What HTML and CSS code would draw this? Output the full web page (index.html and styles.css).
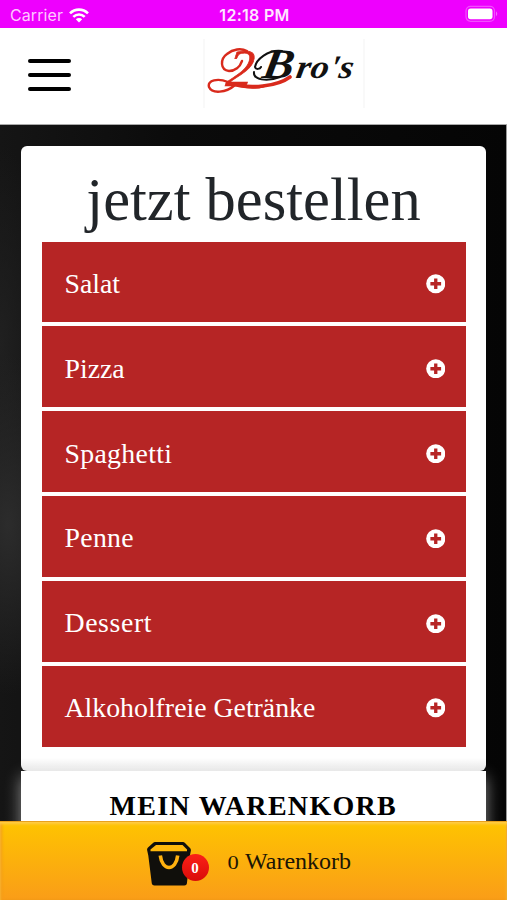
FILE: index.html
```
<!DOCTYPE html>
<html lang="de">
<head>
<meta charset="utf-8">
<meta name="viewport" content="width=device-width, initial-scale=1">
<title>2Bro's – jetzt bestellen</title>
<link rel="stylesheet" href="styles.css">
</head>
<body>
<div class="app">
  <div class="status">
    <div class="carrier"><span>Carrier</span>
      <svg class="wifi" width="20" height="15" viewBox="0 0 20 15"><g fill="none" stroke="#fff" stroke-width="2.6"><path d="M1 5.4C6 .4 14 .4 19 5.4"/><path d="M4.3 8.9c3.3-3.2 8.1-3.2 11.4 0"/></g><path fill="#fff" d="M6.8 11.2c1.8-1.7 4.6-1.7 6.4 0L10 14.5z"/></svg>
    </div>
    <span class="time">12:18 PM</span>
    <svg class="battery" width="34" height="18" viewBox="0 0 34 18"><rect x="1" y="1.3" width="28.5" height="15" rx="4.5" fill="none" stroke="#fff" stroke-opacity=".3" stroke-width="1.2"/><rect x="3" y="3.6" width="24.5" height="10.6" rx="2.6" fill="#fff"/><path d="M31 6.3q2.5 2.5 0 5z" fill="#fff" fill-opacity=".4"/></svg>
  </div>
  <header class="header">
    <button class="menu" aria-label="Menü"><i></i><i></i><i></i></button>
    <svg class="logo" width="162" height="70" viewBox="203 39 162 70">
      <path d="M204 39v69M364 39v69" stroke="#f8f8f8" stroke-width="1.5"/>
      <text class="two" transform="translate(225 85.500) skewX(-8)">2</text>
      <g class="flourish"><path stroke-width="2.4" d="M242 61C240 67 235 71 229 71C220 70 220 59 227 54C233 49 241 48 247 51"/><path stroke-width="2.4" d="M235 85C226 93 212 94 209 87C207 80 218 78 228 82C238 86 251 90 264 86"/><path stroke-width="3.6" d="M229 83C250 90 278 86 290 77"/></g>
      <path class="ink" d="M282 51C268 49 256 60 255 67C256 70 260 69 261 67M254 72C253 80 267 82 280 77"/>
      <text class="name b" transform="translate(261 78) skewX(-10)" textLength="31" lengthAdjust="spacingAndGlyphs">B</text>
      <text class="name" transform="translate(295 78) skewX(-10)" textLength="57" lengthAdjust="spacingAndGlyphs">ro's</text>
    </svg>
  </header>
  <main class="stage">
    <section class="card">
      <h1>jetzt bestellen</h1>
      <ul class="list">
        <li><span>Salat</span><svg class="plus" viewBox="0 0 20 20"><circle cx="10" cy="10" r="9.8"/><path d="M10 4.5v11M4.500 10h11"/></svg></li>
        <li><span>Pizza</span><svg class="plus" viewBox="0 0 20 20"><circle cx="10" cy="10" r="9.8"/><path d="M10 4.5v11M4.500 10h11"/></svg></li>
        <li><span class="wide">Spaghetti</span><svg class="plus" viewBox="0 0 20 20"><circle cx="10" cy="10" r="9.8"/><path d="M10 4.5v11M4.500 10h11"/></svg></li>
        <li><span class="wide">Penne</span><svg class="plus" viewBox="0 0 20 20"><circle cx="10" cy="10" r="9.8"/><path d="M10 4.5v11M4.500 10h11"/></svg></li>
        <li><span class="wider">Dessert</span><svg class="plus" viewBox="0 0 20 20"><circle cx="10" cy="10" r="9.8"/><path d="M10 4.5v11M4.500 10h11"/></svg></li>
        <li><span>Alkoholfreie Getränke</span><svg class="plus" viewBox="0 0 20 20"><circle cx="10" cy="10" r="9.8"/><path d="M10 4.5v11M4.500 10h11"/></svg></li>
      </ul>
    </section>
    <section class="cart"><h2>MEIN WARENKORB</h2></section>
  </main>
  <footer class="bar">
    <div class="basket">
      <svg width="44" height="44" viewBox="0 0 44 44"><path fill="#100f0b" d="M8 0h28q1 0 2 1l5 5q1 1 .9 2.500l-1 5-3 28q-.3 2-2.500 2h-30q-2.200 0-2.600-2L1.300 13.500.1 8q-.2-1.500.9-2.500l5-4.500q1-1 2-1z"/><path fill="#ffb80b" d="M9 3h26.500l4.500 4.500v1.800H3.500V7.500z"/><path d="M13.300 13.500C15 29.500 29 29.500 30.700 13.500" fill="none" stroke="#ffb10f" stroke-width="3.600"/></svg>
      <span class="badge">0</span>
    </div>
    <div class="total"><span class="zero">0</span><span>Warenkorb</span></div>
  </footer>
</div>
</body>
</html>
```
FILE: styles.css
```
* { box-sizing: border-box; }
body { margin: 0; font-family: "Liberation Serif", serif; }
.app {
  width: 507px; height: 900px; overflow: hidden;
  display: flex; flex-direction: column;
  background: #fff;
}
.status {
  height: 28px; flex: none; padding: 0 8px 0 10px;
  display: grid; grid-template-columns: 1fr auto 1fr; align-items: center;
  background: #ee00fe; color: #fff;
  font: 500 16px/28px Inter, sans-serif;
}
.carrier { display: flex; align-items: center; gap: 7px; color: #ffc8ff; font-weight: 400; letter-spacing: .1px; }
.carrier span { width: 52px; padding-top: 1px; }
.wifi { margin-top: 1px; }
.time { font-weight: 600; font-size: 16px; letter-spacing: .3px; padding-top: 1px; color: #ffe6ff; }
.battery { justify-self: end; margin-top: -2px; }
.header {
  height: 97px; flex: none; padding: 11px 142px 0 28px;
  display: flex; justify-content: space-between; align-items: flex-start;
  background: #fff; border-bottom: 1px solid #aaa;
}
.menu {
  margin: 20px 0 0; padding: 0; width: 43px; border: 0; background: none;
  display: flex; flex-direction: column; gap: 9.750px;
}
.menu i { height: 4px; border-radius: 2px; background: #000; }
.flourish { fill: none; stroke: #d92a1c; stroke-linecap: round; }
.two { font: italic 53px "Liberation Serif", serif; fill: #d92a1c; stroke: #d92a1c; stroke-width: .7; }
.ink { fill: none; stroke: #111; stroke-width: 2; stroke-linecap: round; }
.name { font: italic bold 33px "Liberation Serif", serif; fill: #111; }
.name.b { font-size: 42px; }
.stage {
  flex: 1; min-height: 0; overflow: hidden; padding: 21px 20.500px 0 21px;
  border-right: 1px solid #999;
  background:
    radial-gradient(ellipse 70px 170px at 8px 400px, #2c2c2c, transparent),
    radial-gradient(ellipse 50px 200px at 0 220px, #202020, transparent),
    linear-gradient(90deg, #151515, #0b0b0b 35%, #050505);
}
.card {
  height: 625px; padding: 19px 20px 0 20.500px; border-radius: 6px;
  background: linear-gradient(#fff 612px, #e6e6e6);
}
h1 {
  margin: 0; height: 76.500px; text-align: center;
  font-weight: 400; font-size: 60.500px; line-height: 70px; color: #212529;
}
.list { margin: 0; padding: 0; list-style: none; display: grid; gap: 4.200px; }
.list li {
  height: 80.700px; padding: 4px 20.500px 0 23px;
  display: flex; align-items: center; justify-content: space-between;
  background: #b62525; color: #fff; font-size: 27.800px;
}
.wide { letter-spacing: .3px; }
.wider { letter-spacing: .6px; }
.plus { width: 19.500px; height: 19.500px; }
.plus circle { fill: #fff; }
.plus path { stroke: #b62525; stroke-width: 3.400; }
.cart {
  height: 150px; background: #fff; text-align: center;
  box-shadow: 0 6px 15px rgba(255, 255, 255, .5);
}
h2 { margin: 0; padding-top: 19px; font-size: 28px; line-height: 32px; letter-spacing: 1.300px; color: #000; white-space: nowrap; }
.bar {
  height: 79px; flex: none; position: relative; padding: 21px 0 0 147px;
  display: flex; align-items: flex-start; gap: 36px;
  background: linear-gradient(#fec400, #fa9d18);
  box-shadow: inset 0 1px 0 #e9a11c, inset 0 3px 3px #ffcd4a, inset 2px 0 3px #f19a18, inset -1px 0 1px #e7981c;
}
.basket { position: relative; width: 44px; height: 44px; }
.badge {
  position: absolute; left: 34.500px; top: 12px; width: 27px; height: 27px; border-radius: 50%;
  background: linear-gradient(#fb2117, #d90b09); color: #fff;
  font-weight: bold; font-size: 15px; line-height: 29px; text-align: center;
}
.total { display: flex; align-items: baseline; gap: 6px; font-size: 24px; line-height: 38px; color: #1b1505; }
.zero { font-size: 18px; width: 12px; text-align: center; transform: scaleX(1.250); }
```
